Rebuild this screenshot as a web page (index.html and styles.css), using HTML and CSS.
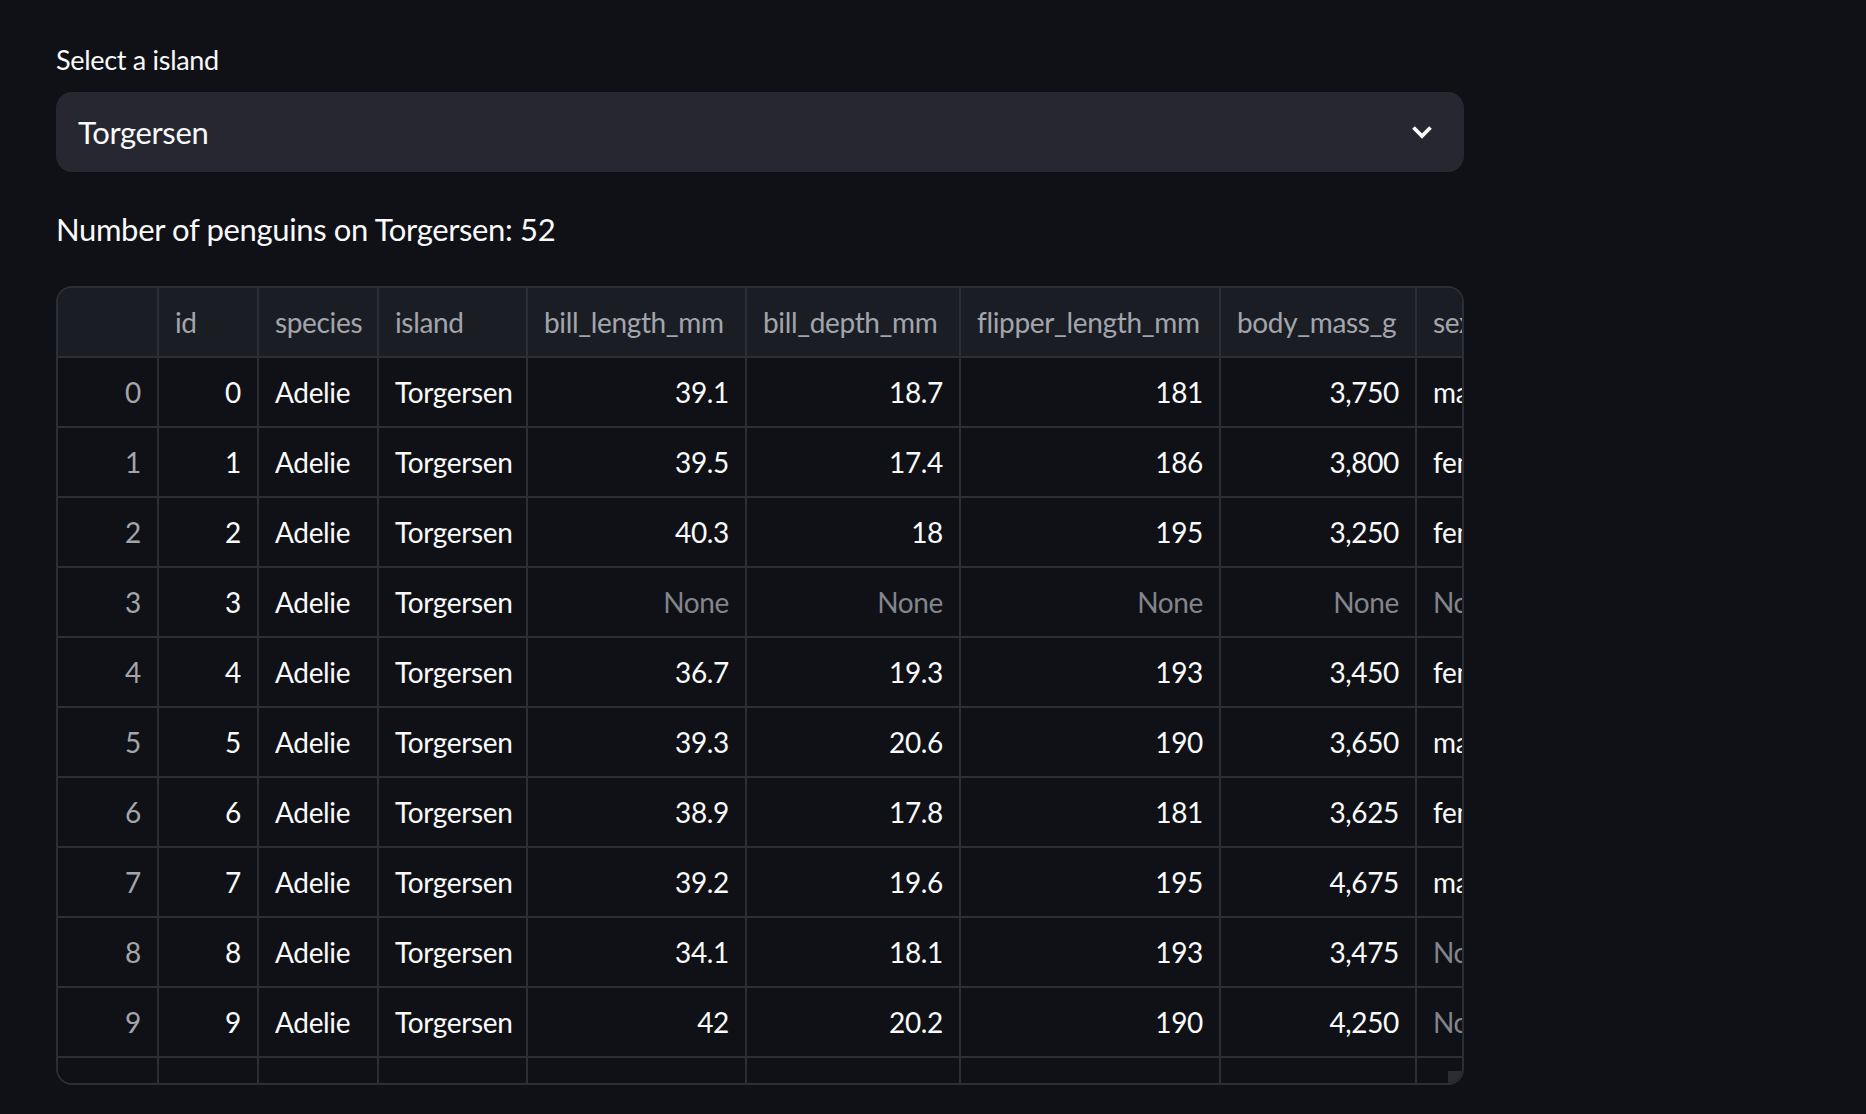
FILE: index.html
```html
<!DOCTYPE html>
<html>
<head>
<meta charset="utf-8">
<link rel="stylesheet" href="styles.css">
</head>
<body>
<main class="main">
  <div class="field">
    <label class="label">Select a island</label>
    <div class="select">
      <span class="select-value">Torgersen</span>
      <svg class="chevron" width="22" height="14" viewBox="0 0 22 14"><path d="M2.5 2.5 L11 11 L19.5 2.5" fill="none" stroke="#fafafa" stroke-width="3.8" stroke-linejoin="miter"/></svg>
    </div>
  </div>
  <p class="count">Number of penguins on Torgersen: 52</p>
  <div class="grid-wrap">
    <table class="grid">
      <colgroup>
        <col class="c-idx"><col class="c-id"><col class="c-species"><col class="c-island"><col class="c-bl"><col class="c-bd"><col class="c-fl"><col class="c-bm"><col class="c-sex">
      </colgroup>
      <thead>
        <tr><th></th><th>id</th><th>species</th><th>island</th><th>bill_length_mm</th><th>bill_depth_mm</th><th>flipper_length_mm</th><th>body_mass_g</th><th>sex</th></tr>
      </thead>
      <tbody>
        <tr><td class="idx">0</td><td class="num">0</td><td>Adelie</td><td>Torgersen</td><td class="num">39.1</td><td class="num">18.7</td><td class="num">181</td><td class="num">3,750</td><td>male</td></tr>
        <tr><td class="idx">1</td><td class="num">1</td><td>Adelie</td><td>Torgersen</td><td class="num">39.5</td><td class="num">17.4</td><td class="num">186</td><td class="num">3,800</td><td>female</td></tr>
        <tr><td class="idx">2</td><td class="num">2</td><td>Adelie</td><td>Torgersen</td><td class="num">40.3</td><td class="num">18</td><td class="num">195</td><td class="num">3,250</td><td>female</td></tr>
        <tr><td class="idx">3</td><td class="num">3</td><td>Adelie</td><td>Torgersen</td><td class="num none">None</td><td class="num none">None</td><td class="num none">None</td><td class="num none">None</td><td class="none">None</td></tr>
        <tr><td class="idx">4</td><td class="num">4</td><td>Adelie</td><td>Torgersen</td><td class="num">36.7</td><td class="num">19.3</td><td class="num">193</td><td class="num">3,450</td><td>female</td></tr>
        <tr><td class="idx">5</td><td class="num">5</td><td>Adelie</td><td>Torgersen</td><td class="num">39.3</td><td class="num">20.6</td><td class="num">190</td><td class="num">3,650</td><td>male</td></tr>
        <tr><td class="idx">6</td><td class="num">6</td><td>Adelie</td><td>Torgersen</td><td class="num">38.9</td><td class="num">17.8</td><td class="num">181</td><td class="num">3,625</td><td>female</td></tr>
        <tr><td class="idx">7</td><td class="num">7</td><td>Adelie</td><td>Torgersen</td><td class="num">39.2</td><td class="num">19.6</td><td class="num">195</td><td class="num">4,675</td><td>male</td></tr>
        <tr><td class="idx">8</td><td class="num">8</td><td>Adelie</td><td>Torgersen</td><td class="num">34.1</td><td class="num">18.1</td><td class="num">193</td><td class="num">3,475</td><td class="none">None</td></tr>
        <tr><td class="idx">9</td><td class="num">9</td><td>Adelie</td><td>Torgersen</td><td class="num">42</td><td class="num">20.2</td><td class="num">190</td><td class="num">4,250</td><td class="none">None</td></tr>
        <tr class="partial"><td class="idx">10</td><td class="num">10</td><td>Adelie</td><td>Torgersen</td><td class="num">37.8</td><td class="num">17.1</td><td class="num">186</td><td class="num">3,300</td><td class="none">None</td></tr>
      </tbody>
    </table>
    <div class="scroll-corner"></div>
  </div>
</main>
</body>
</html>
```

FILE: styles.css
```css
html, body {
  margin: 0;
  padding: 0;
  background: #0f1116;
  color: #fafafa;
  font-family: Lato, "Noto Sans", sans-serif;
}

.main {
  width: 1408px;
  padding: 40px 0 0 56px;
  display: flex;
  flex-direction: column;
}

.field {
  display: flex;
  flex-direction: column;
  gap: 12px;
}

.label {
  font-size: 27px;
  letter-spacing: -0.3px;
  line-height: 40px;
  color: #fafafa;
}

.select {
  height: 80px;
  box-sizing: border-box;
  background: #262730;
  border-radius: 16px;
  display: flex;
  align-items: center;
  justify-content: space-between;
  padding: 0 31px 0 22px;
}

.select-value {
  font-size: 31px;
  letter-spacing: -0.35px;
  line-height: 40px;
}

.chevron {
  display: block;
}

.count {
  margin: 32px 0 0 0;
  font-size: 31px;
  letter-spacing: -0.35px;
  line-height: 51px;
}

.grid-wrap {
  position: relative;
  margin-top: 31px;
  height: 799px;
  box-sizing: border-box;
  border: 2px solid #2c2e36;
  border-radius: 16px;
  overflow: hidden;
}

.grid {
  table-layout: fixed;
  border-collapse: separate;
  border-spacing: 0;
  width: 1525px;
  font-size: 28px;
  letter-spacing: -0.35px;
}

.c-idx { width: 101px; }
.c-id { width: 100px; }
.c-species { width: 120px; }
.c-island { width: 149px; }
.c-bl { width: 219px; }
.c-bd { width: 214px; }
.c-fl { width: 260px; }
.c-bm { width: 196px; }
.c-sex { width: 166px; }

.grid th,
.grid td {
  height: 68px;
  padding: 0 16px;
  border-right: 2px solid #2c2e36;
  border-bottom: 2px solid #2c2e36;
  white-space: nowrap;
  overflow: hidden;
  text-align: left;
  font-weight: 400;
}

.grid th {
  background: #1b1d25;
  color: #a3a5ab;
}

.grid td {
  background: #0f1116;
  color: #fafafa;
}

.grid td.num,
.grid td.idx {
  text-align: right;
}

.grid td.idx {
  color: #a3a5ab;
}

.grid td.none {
  color: #83858b;
}

.grid tr.partial td {
  padding-top: 3px;
}

.scroll-corner {
  position: absolute;
  right: 0;
  bottom: 0;
  width: 14px;
  height: 12px;
  background: #2c2d33;
}
```
